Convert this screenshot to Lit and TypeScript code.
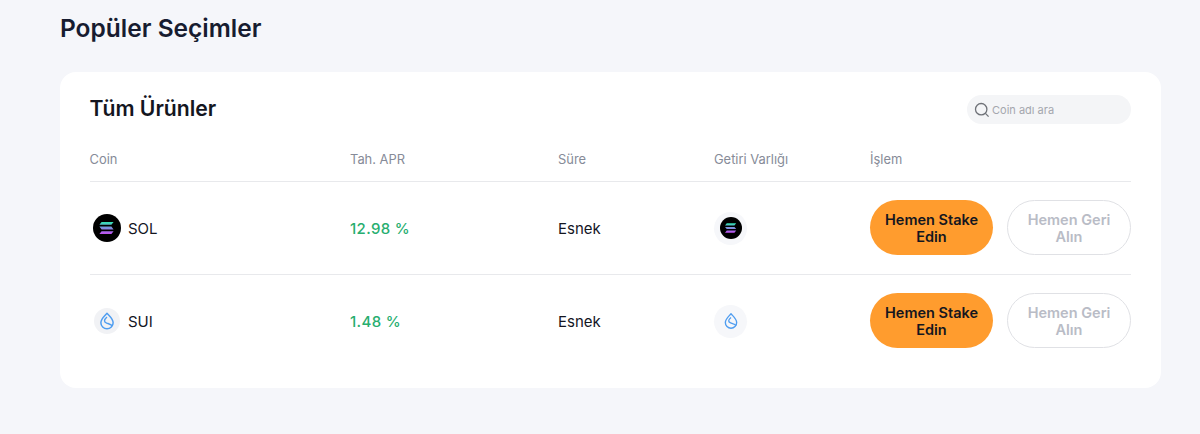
import { LitElement, html, css, svg } from "lit";
import { customElement } from "lit/decorators.js";

const rows = [
  { coin: "SOL", apr: "12.98 %", term: "Esnek" },
  { coin: "SUI", apr: "1.48 %", term: "Esnek" },
];

const solIcon = svg`
  <defs>
    <linearGradient id="sol" x1="0" y1="0" x2="0" y2="1">
      <stop offset="0" stop-color="#2fe6b0" />
      <stop offset="0.5" stop-color="#7f8fe0" />
      <stop offset="1" stop-color="#c24ff0" />
    </linearGradient>
  </defs>
  <circle cx="14" cy="14" r="14" fill="#000" />
  <path d="M8.6 7.9h12l-2.2 2.9H6.4z M6.4 12.6h12l2.2 2.8h-12z M8.6 17.2h12l-2.2 2.9H6.4z" fill="url(#sol)" />
`;

const suiDrop = svg`
  <path d="M14 5.6c3 3.3 6.6 6 6.6 10.2a6.6 6.6 0 0 1-13.2 0c0-4.2 3.6-6.9 6.6-10.2z" fill="none" stroke="#4f9df0" stroke-width="1.6" stroke-linejoin="round" />
  <path d="M14 9.8c-3.4 3-3.6 5.2-.4 6.4 2.8 1 5.4 1.6 6.4 3.2" fill="none" stroke="#4f9df0" stroke-width="1.5" />
`;

@customElement("app-root")
export class AppRoot extends LitElement {
  static styles = css`
    :host {
      display: block;
      min-height: 434px;
      background: #f5f6fa;
      font-family: Inter, "Liberation Sans", sans-serif;
      color: #14161f;
      box-sizing: border-box;
      padding: 12px 39px 0 60px;
    }
    h1 {
      margin: 0 0 28px;
      font-size: 24.5px;
      line-height: 32px;
      font-weight: 600;
      color: #171c30;
    }
    .card {
      background: #fff;
      border-radius: 16px;
      padding: 21px 30px;
    }
    .top {
      display: flex;
      justify-content: space-between;
      align-items: center;
      height: 32px;
    }
    h2 {
      margin: 0 0 2px -0.5px;
      font-size: 21.2px;
      line-height: 32px;
      font-weight: 600;
      color: #14161f;
    }
    .search {
      width: 164px;
      height: 29px;
      box-sizing: border-box;
      padding: 1px 0 0 7px;
      display: flex;
      align-items: center;
      gap: 2px;
      background: #f4f5f7;
      border-radius: 15px;
      font-size: 11px;
      color: #a4a7ae;
    }
    .search svg {
      flex: none;
    }
    .row {
      display: grid;
      grid-template-columns: 260px 208px 156px 156px 261px;
      align-items: center;
    }
    .head {
      height: 44px;
      margin-top: 13px;
      font-size: 12.9px;
      color: #868b98;
      border-bottom: 1px solid #e8e9ec;
      box-sizing: border-box;
    }
    .head span:first-child {
      margin-left: -0.5px;
    }
    .item {
      height: 92px;
      font-size: 15px;
      font-weight: 400;
    }
    .item + .item {
      border-top: 1px solid #e8e9ec;
    }
    .coin {
      display: flex;
      align-items: center;
      gap: 7px;
      padding-left: 3px;
    }
    .coin svg.sui {
      margin: 0 1px;
    }
    .apr {
      color: #27ae6f;
      font-weight: 500;
      letter-spacing: 0.35px;
    }
    .asset {
      width: 33px;
      height: 33px;
      border-radius: 50%;
      background: #f6f7fa;
      display: flex;
      align-items: center;
      justify-content: center;
    }
    .actions {
      display: flex;
      gap: 14px;
      margin-bottom: 1px;
    }
    button {
      width: 123px;
      height: 55px;
      padding: 1px 10px 0;
      border-radius: 28px;
      font: 600 14.5px/17px Inter, "Liberation Sans", sans-serif;
      box-sizing: border-box;
    }
    .stake {
      border: none;
      background: #ff9c2e;
      color: #14161f;
    }
    .unstake {
      width: 124px;
      border: 1px solid #e0e1e5;
      background: #fff;
      color: #b9bcc6;
    }
  `;

  coinIcon(coin: string) {
    if (coin === "SOL") {
      return html`<svg width="28" height="28" viewBox="0 0 28 28">${solIcon}</svg>`;
    }
    return html`<svg class="sui" width="26" height="26" viewBox="0 0 28 28">
      <circle cx="14" cy="14" r="14" fill="#f1f2f5" />${suiDrop}
    </svg>`;
  }

  assetIcon(coin: string) {
    if (coin === "SOL") {
      return html`<svg width="22" height="22" viewBox="0 0 28 28">${solIcon}</svg>`;
    }
    return html`<svg width="24" height="24" viewBox="0 0 28 28">${suiDrop}</svg>`;
  }

  render() {
    return html`
      <h1>Popüler Seçimler</h1>
      <div class="card">
        <div class="top">
          <h2>Tüm Ürünler</h2>
          <div class="search">
            <svg width="16" height="16" viewBox="0 0 16 16" fill="none" stroke="#6f7278" stroke-width="1.3">
              <circle cx="7.2" cy="7.2" r="5.7" />
              <path d="M11.4 11.4l3.2 3.2" />
            </svg>
            Coin adı ara
          </div>
        </div>
        <div class="row head">
          <span>Coin</span><span>Tah. APR</span><span>Süre</span><span>Getiri Varlığı</span><span>İşlem</span>
        </div>
        ${rows.map(
          (r) => html`
            <div class="row item">
              <div class="coin">${this.coinIcon(r.coin)}<span>${r.coin}</span></div>
              <div class="apr">${r.apr}</div>
              <div>${r.term}</div>
              <div class="asset">${this.assetIcon(r.coin)}</div>
              <div class="actions">
                <button class="stake">Hemen Stake Edin</button>
                <button class="unstake">Hemen Geri Alın</button>
              </div>
            </div>
          `
        )}
      </div>
    `;
  }
}
